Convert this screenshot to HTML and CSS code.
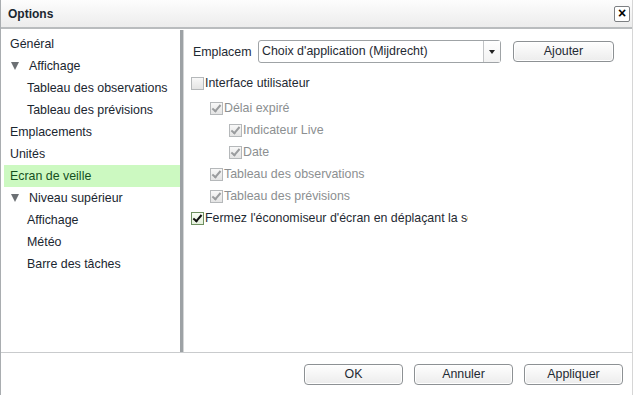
FILE: index.html
```html
<!DOCTYPE html>
<html lang="fr">
<head>
    <meta charset="UTF-8">
    <title>Options</title>
    <link rel="stylesheet" href="styles.css">
</head>
<body>
    <div class="dialog">
        <div class="titlebar">
            <span class="title">Options</span>
            <span class="close">&#215;</span>
        </div>
        <div class="main">
            <div class="tree">
                <div class="item">Général</div>
                <div class="item"><span class="tri"></span>Affichage</div>
                <div class="item sub">Tableau des observations</div>
                <div class="item sub">Tableau des prévisions</div>
                <div class="item">Emplacements</div>
                <div class="item">Unités</div>
                <div class="item active">Ecran de veille</div>
                <div class="item"><span class="tri"></span>Niveau supérieur</div>
                <div class="item sub">Affichage</div>
                <div class="item sub">Météo</div>
                <div class="item sub">Barre des tâches</div>
            </div>
            <div class="panel">
                <div class="toprow">
                    <span class="label">Emplacem</span>
                    <div class="select">
                        <span class="value">Choix d'application (Mijdrecht)</span>
                        <span class="arrow"></span>
                    </div>
                    <div class="btn add">Ajouter</div>
                </div>
                <div class="check lvl0"><span class="box"></span>Interface utilisateur</div>
                <div class="check lvl1 off first"><span class="box on"></span>Délai expiré</div>
                <div class="check lvl2 off"><span class="box on"></span>Indicateur Live</div>
                <div class="check lvl2 off"><span class="box on"></span>Date</div>
                <div class="check lvl1 off"><span class="box on"></span>Tableau des observations</div>
                <div class="check lvl1 off"><span class="box on"></span>Tableau des prévisions</div>
                <div class="check lvl0 clip"><span class="box on dark"></span>Fermez l'économiseur d'écran en déplaçant la souris</div>
            </div>
        </div>
        <div class="footer">
            <div class="btn">OK</div>
            <div class="btn">Annuler</div>
            <div class="btn">Appliquer</div>
        </div>
    </div>
</body>
</html>
```

FILE: styles.css
```css
body {
    margin: 0;
    background: #fff;
    font: 12px "Liberation Sans", Arial, sans-serif;
    color: #1f2a33;
}

.dialog {
    width: 633px;
    height: 395px;
    border-left: 1px solid #a9adb0;
    border-right: 1px solid #d6d6d6;
    box-sizing: border-box;
    background: #fff;
}

.titlebar {
    display: flex;
    align-items: center;
    justify-content: space-between;
    height: 27px;
    padding: 0 2px 0 7px;
    background: linear-gradient(#fdfdfd, #ececec);
    border-bottom: 2px solid #b9bcbe;
}

.title {
    font-weight: bold;
    font-size: 12px;
    color: #1c2730;
}

.close {
    width: 14px;
    height: 14px;
    border: 1px solid #7c7f82;
    border-radius: 2px;
    background: #fff;
    font: bold 14px/13px "Liberation Sans", Arial, sans-serif;
    text-align: center;
    color: #000;
}

.main {
    display: flex;
    height: 322px;
    margin-top: 1px;
    border-bottom: 1px solid #c9cbcd;
}

.tree {
    width: 176px;
    padding: 3px 0 0 3px;
    border-right: 3px solid #9da2a5;
    box-shadow: 1px 0 0 #d4d6d7;
}

.item {
    display: flex;
    align-items: center;
    height: 22px;
    padding-left: 6px;
    font-size: 12.4px;
    color: #1a2630;
}

.item.sub {
    padding-left: 23px;
}

.item.active {
    background: #ccf9c1;
    color: #14501e;
}

.tri {
    width: 0;
    height: 0;
    margin: 0 10px 0 1px;
    border-left: 4px solid transparent;
    border-right: 4px solid transparent;
    border-top: 8px solid #6c7074;
}

.panel {
    flex: 1;
    padding: 10px 0 0 6px;
    overflow: hidden;
    margin-left: 1px;
}

.toprow {
    display: flex;
    align-items: center;
    height: 23px;
    margin-bottom: 9px;
}

.label {
    width: 65px;
    margin-left: 3px;
    font-size: 12.4px;
}

.select {
    display: flex;
    width: 241px;
    height: 21px;
    border: 1px solid #9fa3a6;
    border-radius: 3px;
    background: #fff;
}

.select .value {
    flex: 1;
    padding-left: 3px;
    line-height: 21px;
    font-size: 12.4px;
}

.arrow {
    width: 16px;
    border-left: 1px solid #c2c4c6;
    background: linear-gradient(#fff, #f2f2f2);
    position: relative;
}

.arrow::after {
    content: "";
    position: absolute;
    left: 5px;
    top: 9px;
    border-left: 3px solid transparent;
    border-right: 3px solid transparent;
    border-top: 4px solid #222;
}

.btn {
    width: 97px;
    height: 19px;
    border: 1px solid #8d9194;
    border-radius: 4px;
    background: linear-gradient(#fefefe, #ececec);
    box-shadow: inset 0 0 0 1px #fff;
    text-align: center;
    line-height: 19px;
    font-size: 12.4px;
    color: #1f2a33;
}

.btn.add {
    width: 99px;
    margin-left: 12px;
}

.check {
    display: flex;
    align-items: center;
    height: 22px;
    white-space: nowrap;
    font-size: 12.4px;
}

.check.first {
    margin-top: 3px;
}

.check.lvl0 {
    padding-left: 1px;
}

.check.lvl1 {
    padding-left: 20px;
}

.check.lvl2 {
    padding-left: 39px;
}

.check.off {
    color: #8c8f91;
}

.check.clip {
    width: 277px;
    overflow: hidden;
}

.box {
    position: relative;
    flex-shrink: 0;
    width: 11px;
    height: 11px;
    margin-right: 1px;
    border: 1px solid #b5b8ba;
    background: linear-gradient(#f8f8f8, #e4e4e4);
}

.box.on::after {
    content: "";
    position: absolute;
    left: 3px;
    top: 0;
    width: 3px;
    height: 7px;
    border-right: 2px solid #9a9c9e;
    border-bottom: 2px solid #9a9c9e;
    transform: rotate(40deg);
}

.box.dark {
    border-color: #6d8f5f;
    background: linear-gradient(#fafff6, #e5f0de);
}

.box.dark::after {
    border-color: #111;
}

.footer {
    display: flex;
    justify-content: flex-end;
    gap: 11px;
    padding: 11px 9px 0 0;
}
```
